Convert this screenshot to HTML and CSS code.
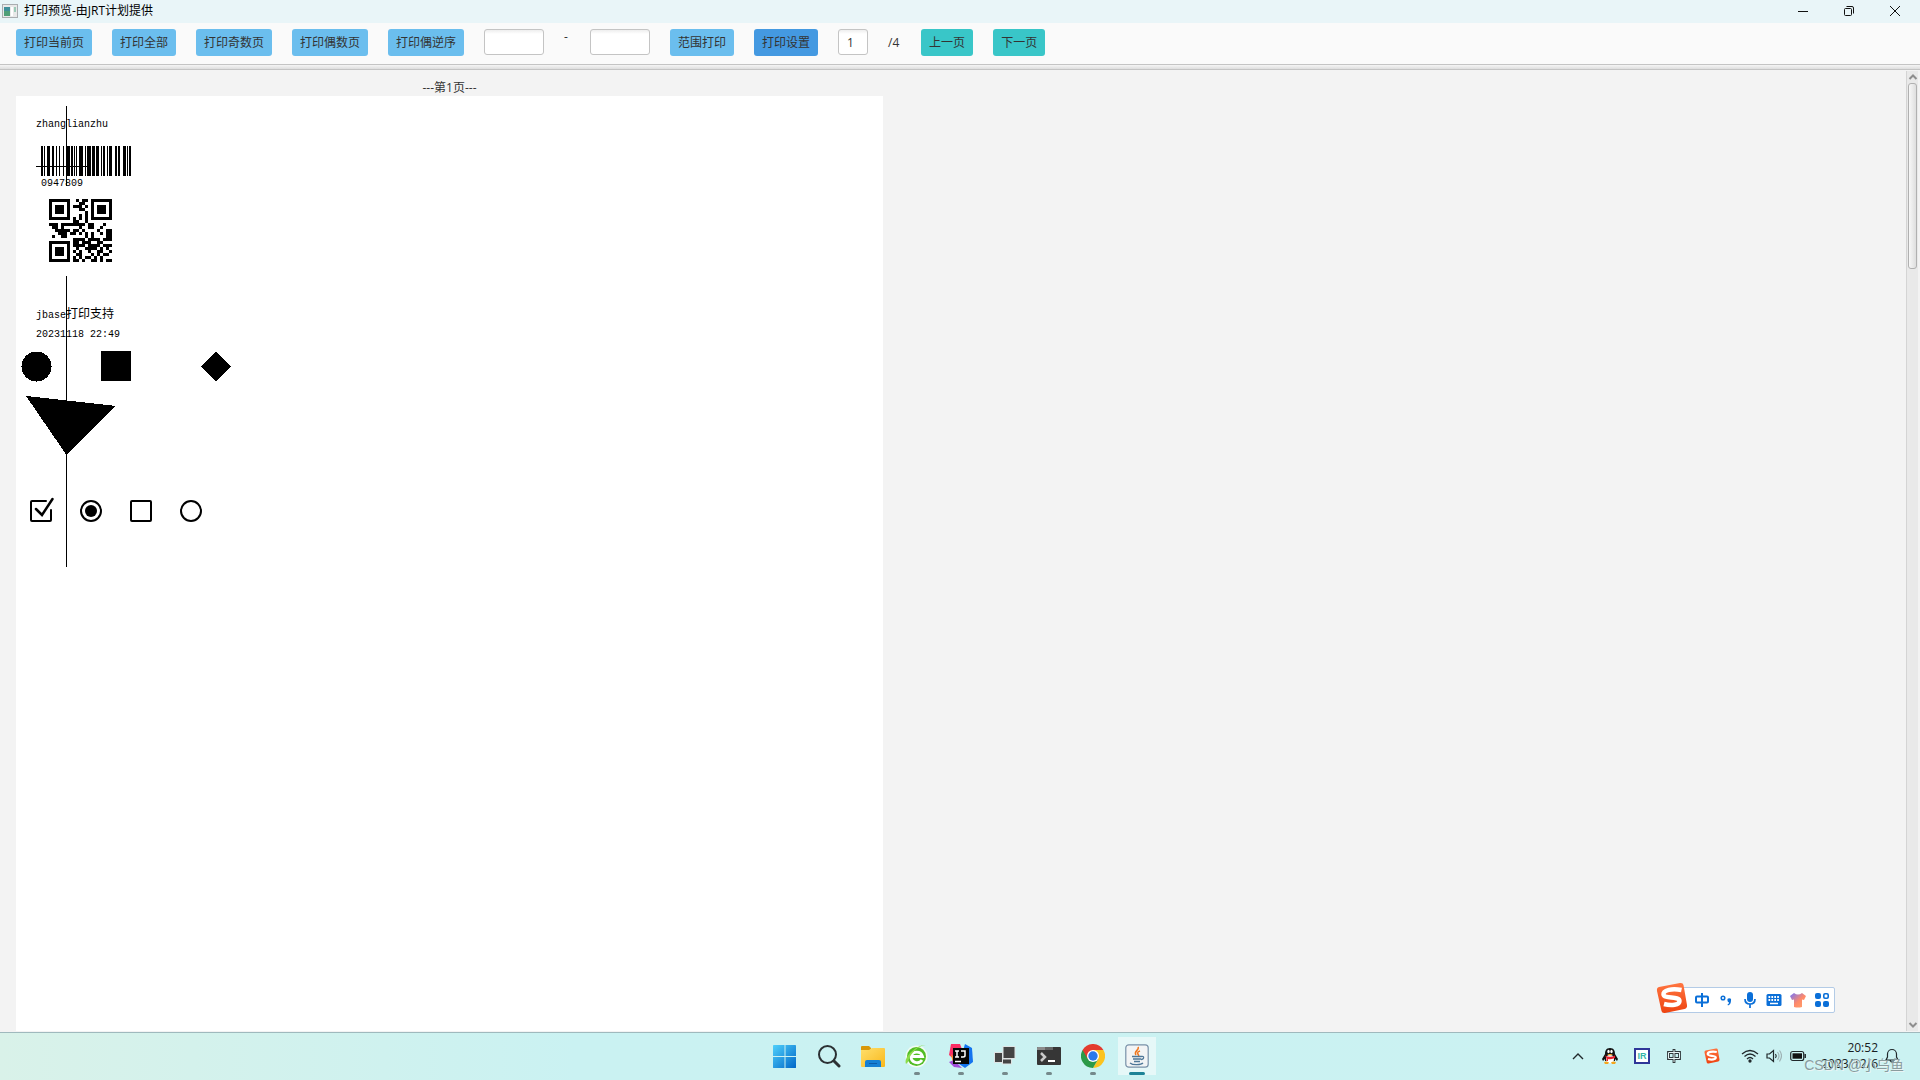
FILE: index.html
```html
<!DOCTYPE html>
<html lang="zh-CN">
<head>
<meta charset="utf-8">
<title>打印预览-由JRT计划提供</title>
<link rel="stylesheet" href="styles.css">
</head>
<body>
<header class="titlebar">
  <svg class="app-icon" width="16" height="16" viewBox="0 0 16 16"><rect x=".5" y="1.500" width="15" height="13" fill="#e9e9e9" stroke="#a9adb0"/><rect x="2" y="4" width="6" height="9" fill="#3e8f9a"/><rect x="2" y="8" width="6" height="5" fill="#4e9f78"/><rect x="9" y="4" width="2" height="9" fill="#fff"/><rect x="12" y="4" width="2" height="5" fill="#9ccbb8"/></svg>
  <h1 class="title">打印预览-由JRT计划提供</h1>
  <button class="win-btn" aria-label="最小化"><svg width="12" height="12" viewBox="0 0 12 12"><path d="M1 6.500h10"/></svg></button>
  <button class="win-btn" aria-label="还原"><svg width="12" height="12" viewBox="0 0 12 12"><rect x="1.500" y="3.500" width="7" height="7" rx="1"/><path d="M3.500 1.500H9A1.500 1.500 0 0 1 10.500 3v5.500"/></svg></button>
  <button class="win-btn" aria-label="关闭"><svg width="12" height="12" viewBox="0 0 12 12"><path d="M1 1l10 10M11 1L1 11"/></svg></button>
</header>

<nav class="toolbar">
  <button class="btn">打印当前页</button>
  <button class="btn">打印全部</button>
  <button class="btn">打印奇数页</button>
  <button class="btn">打印偶数页</button>
  <button class="btn">打印偶逆序</button>
  <div class="range">
    <input class="field" type="text" aria-label="起始页">
    <span class="dash">-</span>
    <input class="field" type="text" aria-label="结束页">
  </div>
  <button class="btn">范围打印</button>
  <button class="btn btn-setup">打印设置</button>
  <input class="field field-page" type="text" value="1" aria-label="当前页">
  <span class="total">/4</span>
  <button class="btn btn-nav">上一页</button>
  <button class="btn btn-nav">下一页</button>
</nav>
<div class="splitter"></div>

<main class="viewer">
  <section class="pages">
    <p class="page-label">---第1页---</p>
    <article class="paper">
      <svg class="print" width="240" height="480" viewBox="16 96 240 480" shape-rendering="crispEdges">
        <text x="36" y="127" class="mono">zhanglianzhu</text>
        <path d="M66.500 106v80M66.500 276v291M36 166.500h52" stroke="#000" fill="none"/>
        <g id="barcode"></g>
        <text x="41" y="186" class="mono">0947809</text>
        <g id="qr"></g>
        <text x="36" y="318" class="mono">jbase<tspan class="cjk">打印支持</tspan></text>
        <text x="36" y="337" class="mono">20231118 22:49</text>
        <circle cx="36.500" cy="366.500" r="15"/>
        <rect x="101" y="351" width="30" height="30"/>
        <path d="M216 351.500l15 15-15 15-15-15zM26 396l90 10-49.500 49z"/>
      </svg>
      <div class="marks">
        <input class="mark mark-checked" type="checkbox" checked aria-label="选中复选框">
        <input class="mark mark-dot" type="radio" name="r1" checked aria-label="选中单选框">
        <input class="mark mark-box" type="checkbox" aria-label="复选框">
        <input class="mark mark-ring" type="radio" name="r2" aria-label="单选框">
      </div>
    </article>
  </section>
  <div class="scrollbar">
    <button class="arrow" aria-label="向上"><svg width="10" height="6" viewBox="0 0 10 6"><path d="M1.500 5L5 1.500 8.500 5"/></svg></button>
    <div class="track"><div class="thumb"></div></div>
    <button class="arrow" aria-label="向下"><svg width="10" height="6" viewBox="0 0 10 6"><path d="M1.500 1L5 4.500 8.500 1"/></svg></button>
  </div>
</main>

<footer class="taskbar">
  <div class="apps">
    <button class="app" aria-label="开始"><svg width="24" height="24" viewBox="0 0 24 24"><defs><linearGradient id="win" x1="0" y1="0" x2="1" y2="1"><stop offset="0" stop-color="#4fd0fb"/><stop offset="1" stop-color="#0067c8"/></linearGradient></defs><path fill="url(#win)" d="M0 1.500Q0 1 1 1h10.500v11H0zM12.500 1H22q1 0 1 .5V12H12.500zM0 13h11.500v11H1q-1 0-1-.5zM12.500 13H23v10.500q0 .5-1 .5h-9.500z"/></svg></button>
    <button class="app" aria-label="搜索"><svg width="24" height="24" viewBox="0 0 24 24" fill="none" stroke="#2b3033"><circle cx="10.500" cy="10.500" r="8.500" stroke-width="2"/><path d="M17 17l5 5" stroke-width="3" stroke-linecap="round"/></svg></button>
    <button class="app" aria-label="文件资源管理器"><svg width="24" height="24" viewBox="0 0 24 24"><defs><linearGradient id="fold" x1="0" y1="0" x2="1" y2="1"><stop offset="0" stop-color="#ffdf6b"/><stop offset="1" stop-color="#f9b81c"/></linearGradient></defs><path fill="#d9980a" d="M0 3q0-1 1-1h7l2 2v3H0z"/><path fill="url(#fold)" d="M0 6h8l3-2h12q1 0 1 1v17q0 1-1 1H1q-1 0-1-1z"/><path fill="#1480d4" d="M4 23v-5q0-2 2-2h12q2 0 2 2v5z"/><path stroke="#0b5caa" d="M8 19.500h8"/></svg></button>
    <button class="app running" aria-label="浏览器"><svg width="24" height="24" viewBox="0 0 24 24"><circle cx="11.500" cy="12.500" r="11" fill="#f3fbf5"/><circle cx="11.500" cy="12.500" r="9.500" fill="#52bd25"/><path d="M6 12.500h11.500A6 6 0 0 0 6 12.500a6 6 0 0 0 11 3.500" fill="none" stroke="#fff" stroke-width="2.800"/><path d="M1 20C-2 13 12 0 21 1c-7 0-16 8-18 17z" fill="#8edc4a"/></svg></button>
    <button class="app running" aria-label="IntelliJ IDEA"><svg width="24" height="24" viewBox="0 0 24 24"><path fill="#fa2d63" d="M2 0h9l3 8-8 8-6-5z"/><path fill="#1474ef" d="M16 0l7 4 1 14-8 6-6-4z"/><path fill="#f68a2b" d="M2 10l4 4-2 6z"/><path fill="#a14ddb" d="M0 18l5-2 8 8-8-1z"/><rect x="4" y="4" width="16" height="16" fill="#050505"/><path d="M6 7h4M8 7v6M6 13h4M12 7h4v4.500q0 1.500-2 1.500h-2M6 17.500h6" fill="none" stroke="#fff" stroke-width="1.500"/></svg></button>
    <button class="app running" aria-label="应用"><svg width="24" height="24" viewBox="0 0 24 24" fill="#444" stroke="#dfe4e4"><rect x="10" y="2.500" width="12" height="12"/><rect x="1.500" y="8.500" width="8" height="10"/><rect x="9.500" y="15" width="9" height="5"/></svg></button>
    <button class="app running" aria-label="终端"><svg width="24" height="24" viewBox="0 0 24 24"><rect y="3" width="24" height="18" rx="1" fill="#363636"/><path fill="#8c8c8c" d="M0 6V4q0-1 1-1h15v3z"/><path fill="#666" d="M8 3h8v3H8z"/><path d="M4 9l4 4-4 4" fill="none" stroke="#c9c9c9" stroke-width="2.500"/><path d="M11 17h7" stroke="#fff" stroke-width="2"/></svg></button>
    <button class="app running" aria-label="Chrome"><svg width="24" height="24" viewBox="0 0 24 24"><path fill="#fcc31e" d="M12 6h10.400A12 12 0 0 1 12 24l5.200-9z"/><path fill="#2c9a48" d="M1.600 6A12 12 0 0 0 12 24l5.200-9L12 12z"/><path fill="#e33b2e" d="M12 6h10.400A12 12 0 0 0 1.600 6l5.200 9z"/><circle cx="12" cy="12" r="6" fill="#fff"/><circle cx="12" cy="12" r="4.700" fill="#2b79e9"/></svg></button>
    <button class="app running active" aria-label="Java"><svg width="24" height="24" viewBox="0 0 24 24"><rect x=".8" y=".8" width="22.400" height="22.400" rx="3" fill="#f2f4f5" stroke="#7891a8" stroke-width="1.200"/><path d="M13 3c2 3-5 4-2 8M15 7c-3 1-3 2-1 5" fill="none" stroke="#f0781e" stroke-width="1.500"/><path d="M7 12.500h9c4-1 3 3 0 3M8 15h8M9 17.500h6M5 19c3 2.500 11 2 13 0" fill="none" stroke="#4e7798" stroke-width="1.300"/></svg></button>
  </div>
  <div class="tray">
    <button class="tray-btn" aria-label="显示隐藏的图标"><svg width="12" height="8" viewBox="0 0 12 8" fill="none" stroke="#20282b" stroke-width="1.400"><path d="M1 7l5-5 5 5"/></svg></button>
    <button class="tray-btn wide first" aria-label="QQ"><svg width="16" height="16" viewBox="0 0 16 16"><path d="M8 0c4 0 5 3 5 6l3 5-1 2-2-2v2H3v-2l-2 2-1-2 3-5c0-3 1-6 5-6z" fill="#111"/><ellipse cx="8" cy="11" rx="4" ry="4" fill="#fff"/><path d="M3 7.500q5 2.500 10 0v2.500q-5 2-7 1v2H4.500v-3z" fill="#e7222f"/><ellipse cx="6.500" cy="3.500" rx="1.200" ry="1.700" fill="#fff"/><ellipse cx="9.500" cy="3.500" rx="1.200" ry="1.700" fill="#fff"/><path d="M5 6h6l-3 1.500zM2 14.500q2-2 5 0l-1 1.500H3zM9 14.500q3-2 5 0L13 16h-3z" fill="#f5a61d"/></svg></button>
    <button class="tray-btn wide" aria-label="IR"><span class="ir">IR</span></button>
    <button class="tray-btn wide" aria-label="中文输入"><svg width="16" height="16" viewBox="0 0 16 16" fill="none"><path d="M2.500 4.500h11v6h-11zM8 1v14" stroke="#30383b" stroke-width="2.800"/><path d="M2.500 4.500h11v6h-11zM8 2v12" stroke="#e6f5f5"/></svg></button>
    <button class="tray-btn s-tray" aria-label="搜狗输入法"><svg width="16" height="16" viewBox="0 0 32 32"><use href="#sogou"/></svg></button>
    <button class="tray-btn" aria-label="网络"><svg width="18" height="14" viewBox="0 0 18 14" fill="none" stroke="#20282b" stroke-width="1.300"><path d="M1 5q8-7 16 0M3.500 7.500q5.500-5 11 0M6 10q3-3 6 0"/><circle cx="9" cy="12" r="1" fill="#20282b"/></svg></button>
    <button class="tray-btn" aria-label="音量"><svg width="16" height="14" viewBox="0 0 16 14" fill="none" stroke="#20282b" stroke-width="1.200"><path d="M1 5h2.500L7.500 1.500v11L3.500 9H1z"/><path d="M9.500 5q1.500 2 0 4"/><path d="M11.500 3q3 4 0 8M13.500 1.500q4 5 0 11" stroke="#9fb3b5"/></svg></button>
    <button class="tray-btn" aria-label="电池"><svg width="16" height="12" viewBox="0 0 16 12"><rect x=".7" y="1.500" width="13" height="9" rx="2" fill="none" stroke="#20282b" stroke-width="1.200"/><rect x="2.500" y="3.300" width="9.500" height="5.400" fill="#111"/><path d="M15.200 4v4" stroke="#20282b" stroke-width="1.500"/></svg></button>
    <div class="clock"><span>20:52</span><span>2023/12/6</span></div>
    <button class="tray-btn bell" aria-label="通知"><svg width="14" height="16" viewBox="0 0 14 16" fill="none" stroke="#20282b" stroke-width="1.200"><path d="M1 12h12l-1.500-3V6a4.500 4.500 0 0 0-9 0v3zM5 12.500q2 3 4 0"/></svg></button>
  </div>
  <span class="watermark">CSDN @小乌鱼</span>
</footer>

<aside class="ime">
  <svg class="ime-logo" width="32" height="32" viewBox="0 0 32 32"><defs><linearGradient id="so" x1="0" y1="0" x2="0" y2="1"><stop offset="0" stop-color="#ff7540"/><stop offset="1" stop-color="#ee4310"/></linearGradient></defs><g id="sogou"><path d="M3 5L24 1q3-.5 3.500 2L31 23q.5 3-2.500 4L9 31q-3 .5-3.500-2L1 9Q.500 5.500 3 5z" fill="url(#so)"/><path d="M25.500 8C16 6 7 8 7.500 12.500c.5 4.500 16 1.500 16 6.500 0 4-8 5-15.500 3" fill="none" stroke="#fff" stroke-width="4.500"/></g></svg>
  <button class="ime-btn" aria-label="中文"><svg width="16" height="16" viewBox="0 0 16 16" fill="none" stroke="#0a6fd8" stroke-width="2"><rect x="2" y="4.500" width="12" height="6" rx="1"/><path d="M8 1v14"/></svg></button>
  <button class="ime-btn" aria-label="标点"><svg width="16" height="16" viewBox="0 0 16 16"><circle cx="5" cy="6" r="1.800" fill="none" stroke="#0a6fd8" stroke-width="1.500"/><path d="M9.500 8.500a1.800 1.800 0 1 1 3.500 0q0 4-3 5l-.5-1q1.500-.7 1.500-2-1.500-.3-1.500-2z" fill="#0a6fd8"/></svg></button>
  <button class="ime-btn" aria-label="语音"><svg width="16" height="16" viewBox="0 0 16 16"><rect x="5" y="0" width="6" height="10" rx="3" fill="#0a6fd8"/><path d="M3 7q0 5 5 5t5-5M8 12v4" fill="none" stroke="#0a6fd8" stroke-width="1.700"/></svg></button>
  <button class="ime-btn" aria-label="键盘"><svg width="16" height="16" viewBox="0 0 16 16"><rect x=".5" y="2" width="15" height="12" rx="1.500" fill="#0a6fd8"/><path d="M2.500 5h11M2.500 8h11" stroke="#fff" stroke-width="1.800" stroke-dasharray="1.700 1.200"/><path d="M4 11.500h8" stroke="#fff" stroke-width="1.500"/></svg></button>
  <button class="ime-btn" aria-label="皮肤"><svg width="16" height="16" viewBox="0 0 16 16"><defs><linearGradient id="sh" x1="0" y1="0" x2="1" y2="1"><stop offset="0" stop-color="#7074ff"/><stop offset=".55" stop-color="#ff8a6a"/><stop offset="1" stop-color="#ffa46a"/></linearGradient></defs><path d="M4 1q4 3 8 0l4 3-2 4-2-.5V15q-4 1-8 0V7.500L2 8 0 4z" fill="url(#sh)"/></svg></button>
  <button class="ime-btn" aria-label="工具箱"><svg width="16" height="16" viewBox="0 0 16 16" fill="#0a6fd8"><rect x="1" y="1" width="6" height="6" rx="2"/><rect x="1" y="9" width="6" height="6" rx="2"/><rect x="9" y="9" width="6" height="6" rx="2"/><rect x="9.800" y="1.800" width="4.400" height="4.400" rx="1.200" fill="none" stroke="#0a6fd8" stroke-width="1.600"/></svg></button>
</aside>
<script src="codes.js"></script>
</body>
</html>
```
FILE: codes.js
```js
const NS = "http://www.w3.org/2000/svg";

function addPath(id, d) {
  const path = document.createElementNS(NS, "path");
  path.setAttribute("d", d);
  document.getElementById(id).appendChild(path);
}

// Alternating bar and space widths of the barcode.
const bars = [2,1,1,2,3,2,2,2,1,2,1,3,1,2,4,1,2,1,1,1,1,2,4,2,1,1,4,1,3,1,3,2,1,1,2,2,1,1,3,3,2,1,2,3,3,1,1,1,2];
let x = 41;
let d = "";
bars.forEach((w, i) => {
  if (i % 2 === 0) d += `M${x} 146h${w}v30h-${w}z`;
  x += w;
});
addPath("barcode", d);

// One string per row of QR modules.
const qr = [
  "111111100101101111111",
  "100000100011001000001",
  "101110101110101011101",
  "101110100011001011101",
  "101110100000101011101",
  "100000100010101000001",
  "111111101010101111111",
  "000000001100100000000",
  "111011111111011000100",
  "011010000010011001000",
  "001111101101000010011",
  "000111011010101001011",
  "010011000000101000011",
  "100010001110000001100",
  "000000001111011110111",
  "111111101101110011000",
  "100000101111011110111",
  "101110100100111101010",
  "101110101010010011001",
  "101110100110001010110",
  "100000101010110101000",
  "111111101101001101011"
];
qr.splice(13, 1);
d = "";
qr.forEach((row, r) => {
  [...row].forEach((m, c) => {
    if (m === "1") d += `M${49 + c * 3} ${199 + r * 3}h3v3h-3z`;
  });
});
addPath("qr", d);
```
FILE: styles.css
```css
* { box-sizing: border-box; }

body {
  margin: 0;
  height: 100vh;
  display: flex;
  flex-direction: column;
  overflow: hidden;
  background: #f3f3f3;
  color: #333;
  font: 12px/16px "Open Sans", "Noto Sans CJK SC", sans-serif;
}

button, input { font: inherit; color: inherit; margin: 0; }
button { border: 0; padding: 0; background: none; }
svg { display: block; }

.titlebar {
  flex: none;
  height: 23px;
  display: flex;
  align-items: center;
  padding: 0 2px 2px;
  background: #e9f5f8;
}
.app-icon { margin-right: 6px; }
.title {
  flex: 1;
  margin: 0;
  font-size: 12px;
  font-weight: 400;
  color: #000;
}
.win-btn {
  width: 46px;
  height: 20px;
  display: grid;
  place-items: center;
}
.win-btn svg { fill: none; stroke: #111; }

.toolbar {
  flex: none;
  display: flex;
  align-items: flex-start;
  gap: 20px;
  padding: 6px 16px 8px;
  background: #fafafa;
}
.btn {
  height: 27px;
  padding: 0 8px;
  border-radius: 3px;
  background: #6bbeee;
}
.btn-setup { background: #4499e1; }
.btn-nav { background: #39c6c8; }
.range { display: flex; gap: 20px; }
.dash { width: 6px; }
.field {
  width: 60px;
  height: 26px;
  padding: 0 8px;
  border: 1px solid #c4c4c4;
  border-radius: 3px;
  background: linear-gradient(#eee, #fff 4px);
}
.field-page { width: 30px; }
.total { width: 13px; line-height: 27px; }

.splitter {
  flex: none;
  height: 6px;
  border: solid #c4c4c4;
  border-width: 1px 0;
  background: linear-gradient(#f5f5f5, #dedede);
}

.viewer {
  flex: 1;
  min-height: 0;
  display: flex;
  padding: 1px 2px 1px 1px;
}
.pages {
  flex: 1;
  overflow: hidden;
  padding: 9px 15px 0;
}
.page-label {
  width: 867px;
  margin: 0;
  text-align: center;
}
/* A4 sheet at 105 dpi */
.paper {
  position: relative;
  width: 867px;
  height: 1227px;
  background: #fff;
}
.mono { font: 10px "Liberation Mono", monospace; fill: #000; }
.cjk { font: 12px "Noto Sans CJK SC", sans-serif; }
.marks {
  position: absolute;
  left: 14px;
  top: 400px;
  display: flex;
  gap: 24px;
}
.mark {
  appearance: none;
  width: 26px;
  height: 26px;
}
.mark-checked { background: url("data:image/svg+xml,%3Csvg xmlns='http://www.w3.org/2000/svg' width='26' height='26' fill='none' stroke='%23000' stroke-width='2' stroke-linecap='round'%3E%3Cpath d='M16 5H2Q1 5 1 6v18q0 1 1 1h18q1 0 1-1V14'/%3E%3Cpath d='M6 13l6 6L22.500 3' stroke-width='2.500'/%3E%3C/svg%3E"); }
.mark-dot { background: url("data:image/svg+xml,%3Csvg xmlns='http://www.w3.org/2000/svg' width='26' height='26'%3E%3Ccircle cx='11' cy='15' r='10' fill='none' stroke='%23000' stroke-width='2'/%3E%3Ccircle cx='11' cy='15' r='6'/%3E%3C/svg%3E"); }
.mark-box { background: url("data:image/svg+xml,%3Csvg xmlns='http://www.w3.org/2000/svg' width='26' height='26'%3E%3Crect x='1' y='5' width='20' height='20' rx='1' fill='none' stroke='%23000' stroke-width='2'/%3E%3C/svg%3E"); }
.mark-ring { background: url("data:image/svg+xml,%3Csvg xmlns='http://www.w3.org/2000/svg' width='26' height='26'%3E%3Ccircle cx='11' cy='15' r='10' fill='none' stroke='%23000' stroke-width='2'/%3E%3C/svg%3E"); }

.scrollbar {
  width: 12px;
  display: flex;
  flex-direction: column;
  border-left: 1px solid #d4d4d4;
  background: #e9e9e9;
}
.arrow {
  height: 12px;
  display: grid;
  place-items: center;
}
.arrow svg { fill: none; stroke: #8e8e8e; stroke-width: 2; }
.track { flex: 1; padding: 0 1px; }
.thumb {
  height: 186px;
  border: 1px solid #b0b0b0;
  border-radius: 3px;
  background: linear-gradient(90deg, #f7f7f7, #dedede);
}

.taskbar {
  flex: none;
  position: relative;
  height: 48px;
  display: grid;
  grid-template-columns: 1fr auto 1fr;
  border-top: 1px solid #9fb9bd;
  background: linear-gradient(90deg, #d9f2e9, #caf2f2 30%, #cbf2f2);
}
.apps {
  grid-column: 2;
  display: flex;
  padding: 0 0 2px 2px;
}
.app {
  width: 44px;
  display: grid;
  place-items: center;
  position: relative;
}
.running::after {
  content: "";
  position: absolute;
  left: 19px;
  bottom: 3px;
  width: 6px;
  height: 3px;
  border-radius: 2px;
  background: #75898b;
}
.active {
  background: linear-gradient(#e6f8f8, #e6f8f8) center 4px / 38px 38px no-repeat;
}
.active::after { left: 14px; width: 16px; background: #1d8397; }

.tray {
  display: flex;
  align-items: center;
  justify-content: flex-end;
  padding: 0 14px 2px 0;
  color: #182022;
}
.tray-btn {
  width: 24px;
  height: 32px;
  display: grid;
  place-items: center;
}
.wide { width: 32px; }
.first { margin-left: 4px; }
.s-tray { width: 44px; margin-right: 4px; }
.ir {
  width: 16px;
  height: 16px;
  border: 2px solid #2f3699;
  background: #fff;
  color: #35b5a8;
  font: 700 9px/12px "Liberation Sans", sans-serif;
}
.clock {
  width: 68px;
  display: flex;
  flex-direction: column;
  text-align: right;
}
.bell { width: 28px; }
.watermark {
  position: absolute;
  right: 16px;
  bottom: 5px;
  font: 14px/20px "Liberation Sans", "Noto Sans CJK SC", sans-serif;
  color: #8a9c9e;
  text-shadow: 1px 1px #e9f5f5;
}

.ime {
  position: absolute;
  right: 85px;
  bottom: 67px;
  height: 26px;
  display: flex;
  align-items: center;
  padding: 0 0 0 24px;
  border: 1px solid #b3cbe6;
  border-radius: 2px;
  background: #fff;
}
.ime-logo {
  position: absolute;
  left: -10px;
  bottom: -2px;
}
.ime-btn {
  width: 24px;
  height: 24px;
  display: grid;
  place-items: center;
}
```
